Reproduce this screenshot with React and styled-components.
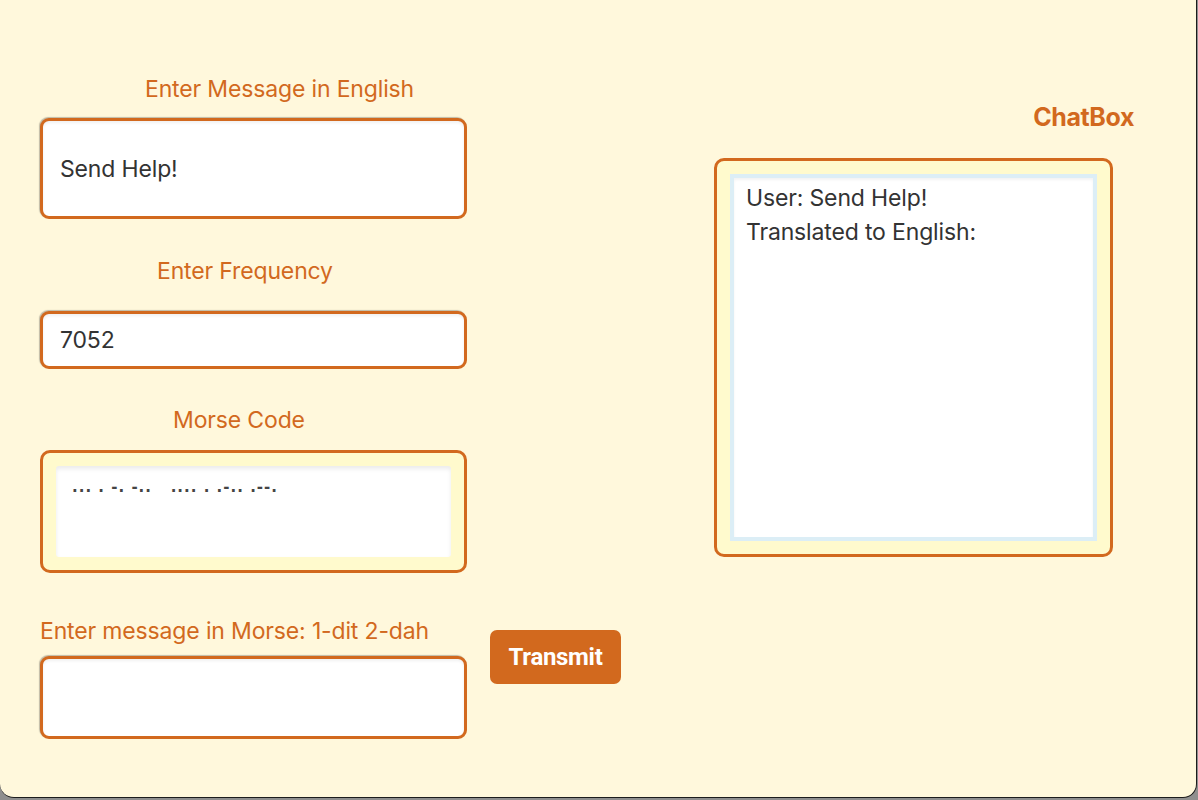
import React from "react"
import styled, { createGlobalStyle } from "styled-components"

const GlobalStyle = createGlobalStyle`
  html, body {
    margin: 0;
    padding: 0;
    background: #8f8f8f;
  }
  * {
    box-sizing: border-box;
  }
`

const orange = "#d2691e"

const Window = styled.div`
  width: 1197px;
  height: 798px;
  background: #fff8dc;
  border-right: 1px solid #1c1c1c;
  border-bottom: 1px solid #1c1c1c;
  border-bottom-left-radius: 14px;
  border-bottom-right-radius: 14px;
  display: flex;
  padding-left: 40px;
  font-family: Inter, "Noto Sans", sans-serif;
  overflow: hidden;
`

const LeftColumn = styled.div`
  width: 600px;
  padding-top: 76px;
  display: flex;
  flex-direction: column;
`

const Label = styled.div`
  color: ${orange};
  font-size: 23px;
  line-height: 26px;
  letter-spacing: -0.15px;
  padding-left: ${(p) => p.$indent || 0}px;
  margin-bottom: ${(p) => p.$gap || 0}px;
`

const TextInput = styled.input`
  display: block;
  width: 427px;
  height: ${(p) => p.$h}px;
  margin-bottom: ${(p) => p.$after || 0}px;
  border: 3px solid ${orange};
  border-radius: 9px;
  background: #fff;
  padding: 0 17px;
  font-family: Inter, "Noto Sans", sans-serif;
  font-size: 23px;
  letter-spacing: -0.15px;
  color: #333;
  outline: none;
  box-shadow: -1px -1px 1px rgba(0, 0, 0, 0.25),
    inset 0 2px 3px rgba(0, 0, 0, 0.06);
`

const MorseFrame = styled.div`
  width: 427px;
  height: 123px;
  border: 3px solid ${orange};
  border-radius: 10px;
  background: #fffacd;
  padding: 13px;
  margin-bottom: 45px;
`

const MorseArea = styled.textarea`
  display: block;
  width: 100%;
  height: 100%;
  border: none;
  border-radius: 3px;
  background: #fff;
  resize: none;
  outline: none;
  padding: 12px 16px;
  font-family: "DejaVu Sans", sans-serif;
  font-size: 15px;
  font-weight: bold;
  letter-spacing: 1px;
  color: #444;
  box-shadow: inset 0 3px 4px rgba(0, 0, 0, 0.08);
`

const SendRow = styled.div`
  display: flex;
  align-items: flex-start;
  gap: 23px;
`

const SendGroup = styled.div`
  display: flex;
  flex-direction: column;
`

const TransmitButton = styled.button`
  margin-top: 12px;
  width: 131px;
  height: 54px;
  background: ${orange};
  border: none;
  border-radius: 7px;
  color: #fff;
  font-family: Roboto, Inter, sans-serif;
  font-weight: 700;
  font-size: 24px;
  letter-spacing: -0.3px;
  cursor: pointer;
`

const RightColumn = styled.div`
  margin-left: 74px;
  width: 420px;
  padding-top: 103px;
  display: flex;
  flex-direction: column;
`

const ChatTitle = styled.h2`
  margin: 0 0 27px;
  align-self: flex-end;
  color: ${orange};
  font-size: 25px;
  line-height: 28px;
  font-weight: 700;
  letter-spacing: -0.4px;
`

const ChatFrame = styled.div`
  width: 399px;
  height: 399px;
  border: 3px solid ${orange};
  border-radius: 10px;
  background: #fffacd;
  padding: 13px;
`

const ChatLog = styled.textarea`
  display: block;
  width: 100%;
  height: 100%;
  border: 4px solid #dceef6;
  background: #fff;
  resize: none;
  outline: none;
  padding: 3px 12px;
  font-family: Inter, "Noto Sans", sans-serif;
  font-size: 23px;
  line-height: 34px;
  letter-spacing: -0.15px;
  color: #333;
  box-shadow: inset 0 2px 3px rgba(0, 0, 0, 0.05);
`

export default function App() {
  return (
    <>
      <GlobalStyle />
      <Window>
        <LeftColumn>
          <Label $indent={105} $gap={16}>
            Enter Message in English
          </Label>
          <TextInput $h={101} $after={39} defaultValue="Send Help!" />

          <Label $indent={117} $gap={27}>
            Enter Frequency
          </Label>
          <TextInput $h={58} $after={38} defaultValue="7052" />

          <Label $indent={133} $gap={17}>
            Morse Code
          </Label>
          <MorseFrame>
            <MorseArea readOnly value="... . -. -..   .... . .-.. .--." />
          </MorseFrame>

          <SendRow>
            <SendGroup>
              <Label $gap={12}>Enter message in Morse: 1-dit 2-dah</Label>
              <TextInput $h={83} />
            </SendGroup>
            <TransmitButton>Transmit</TransmitButton>
          </SendRow>
        </LeftColumn>

        <RightColumn>
          <ChatTitle>ChatBox</ChatTitle>
          <ChatFrame>
            <ChatLog
              readOnly
              value={"User: Send Help!\nTranslated to English:"}
            />
          </ChatFrame>
        </RightColumn>
      </Window>
    </>
  )
}
